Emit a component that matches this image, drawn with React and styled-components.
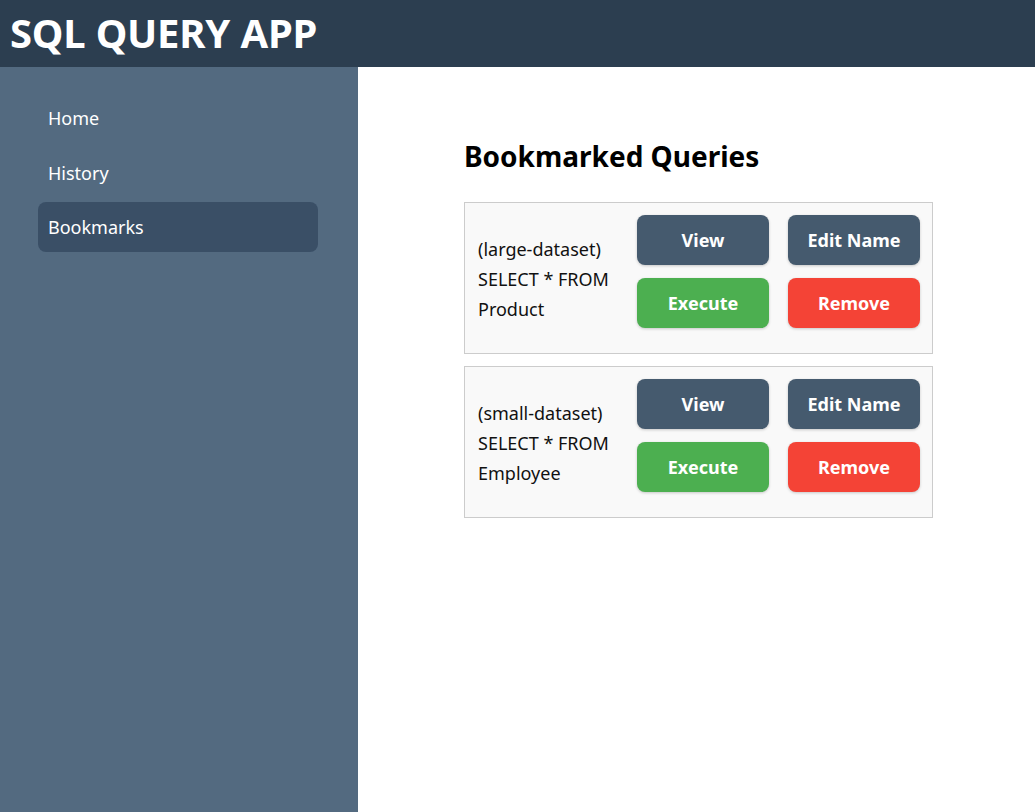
import React from 'react';
import styled, { createGlobalStyle } from 'styled-components';

const GlobalStyle = createGlobalStyle`
  html, body {
    margin: 0;
    padding: 0;
    height: 100%;
  }
  body {
    font-family: "Noto Sans", "Open Sans", sans-serif;
  }
  #root {
    height: 100%;
  }
`;

const Page = styled.div`
  display: flex;
  flex-direction: column;
  height: 100vh;
  overflow: hidden;
`;

const Header = styled.header`
  height: 67px;
  flex-shrink: 0;
  background-color: #2c3e50;
  display: flex;
  align-items: center;
  padding: 0 0 3px 10px;
  box-sizing: border-box;
`;

const AppTitle = styled.h1`
  margin: 0;
  color: white;
  font-size: 40px;
  font-weight: 700;
  letter-spacing: -0.2px;
`;

const Body = styled.div`
  display: flex;
  flex: 1;
  min-height: 0;
`;

const Sidebar = styled.nav`
  width: 358px;
  flex-shrink: 0;
  background-color: #536a80;
  padding: 26px 40px 0 38px;
  box-sizing: border-box;
  display: flex;
  flex-direction: column;
  gap: 4.5px;
`;

const NavItem = styled.div`
  height: 50px;
  display: flex;
  align-items: center;
  padding-left: 10px;
  border-radius: 8px;
  color: white;
  font-size: 18px;
  background-color: ${(p) => (p.$active ? '#3a4f66' : 'transparent')};
  cursor: pointer;
`;

const Main = styled.main`
  flex: 1;
  background: white;
  padding: 70px 0 0 106px;
`;

const Heading = styled.h2`
  margin: 0 0 27px;
  font-size: 28px;
  font-weight: 700;
  color: #000;
`;

const List = styled.div`
  width: 469px;
  display: flex;
  flex-direction: column;
  gap: 12px;
`;

const Card = styled.div`
  display: flex;
  align-items: center;
  justify-content: space-between;
  background-color: #f9f9f9;
  border: 1px solid #ccc;
  padding: 12px 12px 25px 13px;
`;

const QueryText = styled.div`
  font-size: 18px;
  line-height: 30px;
  color: #111;
  width: 150px;
  padding-top: 15px;
`;

const Actions = styled.div`
  display: grid;
  grid-template-columns: 132px 132px;
  column-gap: 19px;
  row-gap: 13px;
`;

const colors = {
  view: '#455a6e',
  execute: '#4caf50',
  remove: '#f44336',
};

const Button = styled.button`
  height: 50px;
  border: none;
  border-radius: 8px;
  background-color: ${(p) => colors[p.$kind] || colors.view};
  color: white;
  font-family: inherit;
  font-size: 18px;
  font-weight: 700;
  box-shadow: 0 1px 3px rgba(0, 0, 0, 0.2);
  cursor: pointer;
`;

const bookmarks = [
  { id: 1, dataset: 'large-dataset', query: 'SELECT * FROM', table: 'Product' },
  { id: 2, dataset: 'small-dataset', query: 'SELECT * FROM', table: 'Employee' },
];

export default function App() {
  return (
    <Page>
      <GlobalStyle />
      <Header>
        <AppTitle>SQL QUERY APP</AppTitle>
      </Header>
      <Body>
        <Sidebar>
          <NavItem>Home</NavItem>
          <NavItem>History</NavItem>
          <NavItem $active>Bookmarks</NavItem>
        </Sidebar>
        <Main>
          <Heading>Bookmarked Queries</Heading>
          <List>
            {bookmarks.map((b) => (
              <Card key={b.id}>
                <QueryText>
                  ({b.dataset})
                  <br />
                  {b.query}
                  <br />
                  {b.table}
                </QueryText>
                <Actions>
                  <Button $kind="view">View</Button>
                  <Button $kind="view">Edit Name</Button>
                  <Button $kind="execute">Execute</Button>
                  <Button $kind="remove">Remove</Button>
                </Actions>
              </Card>
            ))}
          </List>
        </Main>
      </Body>
    </Page>
  );
}
